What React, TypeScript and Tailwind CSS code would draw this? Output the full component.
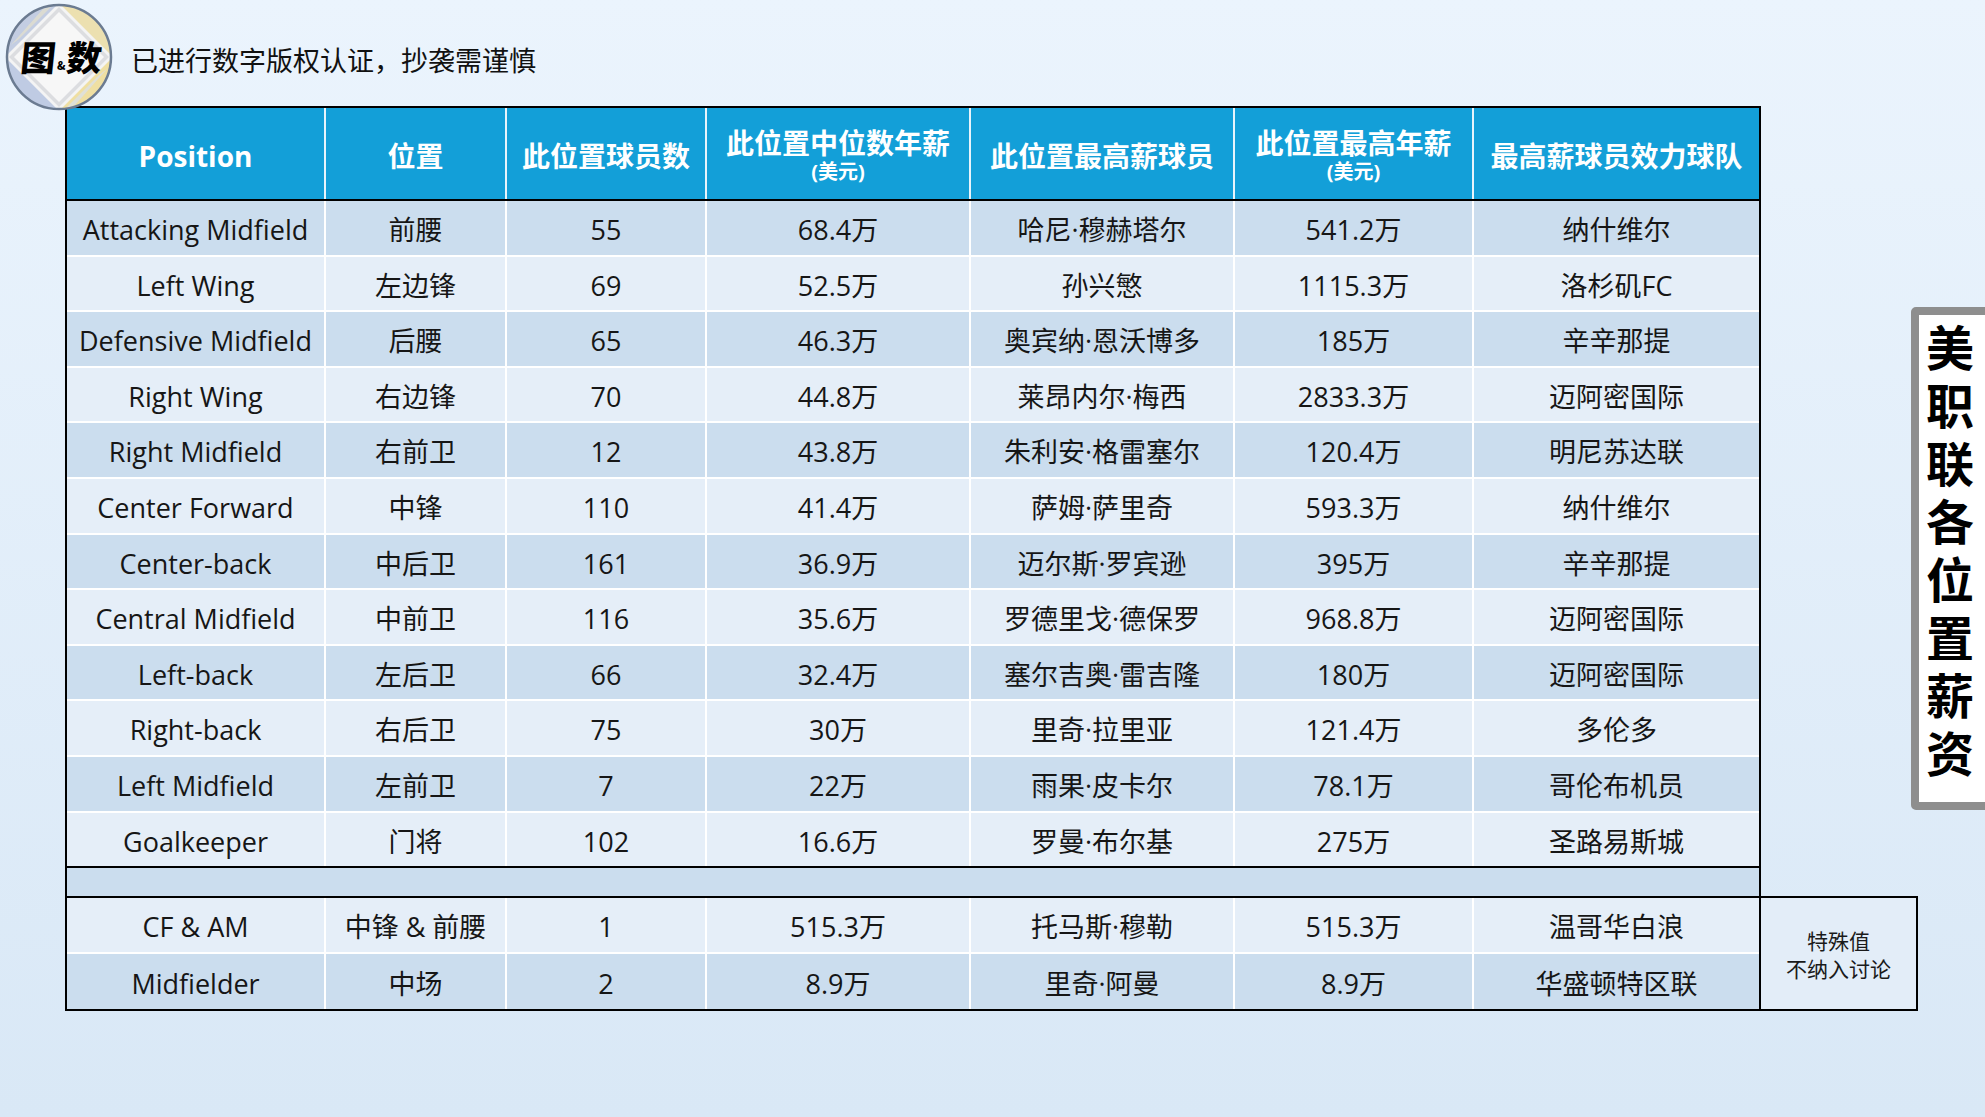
import React from "react";

type Row = [string, string, string, string, string, string, string];

const rows: Row[] = [
  ["Attacking Midfield", "前腰", "55", "68.4万", "哈尼·穆赫塔尔", "541.2万", "纳什维尔"],
  ["Left Wing", "左边锋", "69", "52.5万", "孙兴慜", "1115.3万", "洛杉矶FC"],
  ["Defensive Midfield", "后腰", "65", "46.3万", "奥宾纳·恩沃博多", "185万", "辛辛那提"],
  ["Right Wing", "右边锋", "70", "44.8万", "莱昂内尔·梅西", "2833.3万", "迈阿密国际"],
  ["Right Midfield", "右前卫", "12", "43.8万", "朱利安·格雷塞尔", "120.4万", "明尼苏达联"],
  ["Center Forward", "中锋", "110", "41.4万", "萨姆·萨里奇", "593.3万", "纳什维尔"],
  ["Center-back", "中后卫", "161", "36.9万", "迈尔斯·罗宾逊", "395万", "辛辛那提"],
  ["Central Midfield", "中前卫", "116", "35.6万", "罗德里戈·德保罗", "968.8万", "迈阿密国际"],
  ["Left-back", "左后卫", "66", "32.4万", "塞尔吉奥·雷吉隆", "180万", "迈阿密国际"],
  ["Right-back", "右后卫", "75", "30万", "里奇·拉里亚", "121.4万", "多伦多"],
  ["Left Midfield", "左前卫", "7", "22万", "雨果·皮卡尔", "78.1万", "哥伦布机员"],
  ["Goalkeeper", "门将", "102", "16.6万", "罗曼·布尔基", "275万", "圣路易斯城"],
];

const extra: Row[] = [
  ["CF & AM", "中锋 & 前腰", "1", "515.3万", "托马斯·穆勒", "515.3万", "温哥华白浪"],
  ["Midfielder", "中场", "2", "8.9万", "里奇·阿曼", "8.9万", "华盛顿特区联"],
];

const COLS = "grid grid-cols-[259px_181px_200px_264px_264px_239px_285px]";

function Logo() {
  return (
    <div className="relative w-[108px] h-[108px] shrink-0 mt-[3px]">
      <svg width="108" height="108" viewBox="0 0 108 108" className="absolute inset-0">
        <defs>
          <clipPath id="lc">
            <circle cx="54" cy="54" r="52" />
          </clipPath>
        </defs>
        <g clipPath="url(#lc)">
          <rect x="0" y="0" width="108" height="108" fill="#f4f4f4" />
          <polygon points="0,0 54,0 0,54" fill="#c3cde2" />
          <polygon points="54,0 108,0 108,54" fill="#ece0b0" />
          <polygon points="108,54 108,108 54,108" fill="#efdfa2" />
          <polygon points="0,54 0,108 54,108" fill="#bfcbe3" />
          <polygon points="54,4 104,54 54,104 4,54" fill="#dcdde0" />
          <polygon points="54,9 99,54 54,99 9,54" fill="#f7f7f7" />
          <polygon points="38,6 48,2 14,36 6,42" fill="#e6e1cc" opacity="0.7" />
          <polygon points="70,102 60,106 94,72 102,66" fill="#d9dfee" opacity="0.7" />
        </g>
        <circle cx="54" cy="54" r="52" fill="none" stroke="#6b7b91" strokeWidth="2.5" />
      </svg>
      <div className="absolute left-[16px] top-[34px] flex items-end font-['Noto_Sans_CJK_SC',sans-serif] font-black text-black leading-none">
        <span className="text-[35px] leading-[38px] -skew-x-6">图</span>
        <span className="text-[11px] leading-[12px] mb-[4px] mx-[1px]">&amp;</span>
        <span className="text-[35px] leading-[38px] -skew-x-6">数</span>
      </div>
    </div>
  );
}

function HeaderCell({ main, sub, last }: { main: string; sub?: string; last?: boolean }) {
  return (
    <div
      className={
        last
          ? "flex flex-col items-center justify-center pt-[4px]"
          : "flex flex-col items-center justify-center pt-[4px] border-r-2 border-[#e8f4fb]"
      }
    >
      <div className="text-[28px] leading-[32px] font-bold text-white whitespace-nowrap">{main}</div>
      {sub ? <div className="text-[20px] leading-[26px] font-bold text-white">{sub}</div> : null}
    </div>
  );
}

function DataRow({ r, dark, bottom }: { r: Row; dark: boolean; bottom: "white" | "black" | "none" }) {
  const bg = dark ? "bg-[#cbddee]" : "bg-[#e5eef8]";
  const b =
    bottom === "white" ? "border-b-2 border-white" : bottom === "black" ? "border-b-2 border-black" : "";
  return (
    <div className={`${COLS} h-[55.6px] ${bg} ${b}`}>
      {r.map((c, i) => (
        <div
          key={i}
          className={
            i < 6
              ? "flex items-center justify-center pt-[5px] border-r-2 border-white whitespace-nowrap"
              : "flex items-center justify-center pt-[5px] whitespace-nowrap"
          }
        >
          {c}
        </div>
      ))}
    </div>
  );
}

export default function App() {
  return (
    <div className="w-[1985px] h-[1117px] overflow-hidden flex bg-linear-to-b from-[#ebf4fd] to-[#d9e8f6] font-['Open_Sans','Noto_Sans_CJK_SC',sans-serif] text-[#161616]">
      <div className="w-[1911px] shrink-0 flex flex-col">
        <div className="h-[106px] flex items-start pl-[5px]">
          <Logo />
          <div className="ml-[18px] mt-[42px] text-[27px] leading-[36px] font-['Noto_Sans_CJK_SC',sans-serif] text-[#111]">
            已进行数字版权认证，抄袭需谨慎
          </div>
        </div>

        <div className="ml-[65px] w-[1696px] border-x-2 border-t-2 border-black text-[27px]">
          <div className={`${COLS} h-[93px] bg-[#139fd8] border-b-2 border-black`}>
            <HeaderCell main="Position" />
            <HeaderCell main="位置" />
            <HeaderCell main="此位置球员数" />
            <HeaderCell main="此位置中位数年薪" sub="(美元)" />
            <HeaderCell main="此位置最高薪球员" />
            <HeaderCell main="此位置最高年薪" sub="(美元)" />
            <HeaderCell main="最高薪球员效力球队" last />
          </div>
          {rows.map((r, i) => (
            <DataRow key={i} r={r} dark={i % 2 === 0} bottom={i === rows.length - 1 ? "black" : "white"} />
          ))}
          <div className="h-[28px] bg-[#cbddee]" />
        </div>

        <div className="flex ml-[65px]">
          <div className="w-[1696px] shrink-0 border-2 border-black text-[27px]">
            <DataRow r={extra[0]} dark={false} bottom="white" />
            <DataRow r={extra[1]} dark={true} bottom="none" />
          </div>
          <div className="w-[157px] shrink-0 border-y-2 border-r-2 border-black bg-[#e3edf8] flex flex-col items-center justify-center text-[21px] leading-[28px] font-['Noto_Sans_CJK_SC',sans-serif] text-[#1a1a1a]">
            <div>特殊值</div>
            <div>不纳入讨论</div>
          </div>
        </div>
      </div>

      <div className="mt-[307px] h-[503px] w-[90px] shrink-0 border-[8px] border-[#8e8e8e] rounded-[5px] bg-white pl-[3px] pt-[9px] font-['Noto_Sans_CJK_SC',sans-serif] font-bold text-black">
        <div className="[writing-mode:vertical-rl] text-[48px] leading-[56px] tracking-[10px]">美职联各位置薪资</div>
      </div>
    </div>
  );
}
